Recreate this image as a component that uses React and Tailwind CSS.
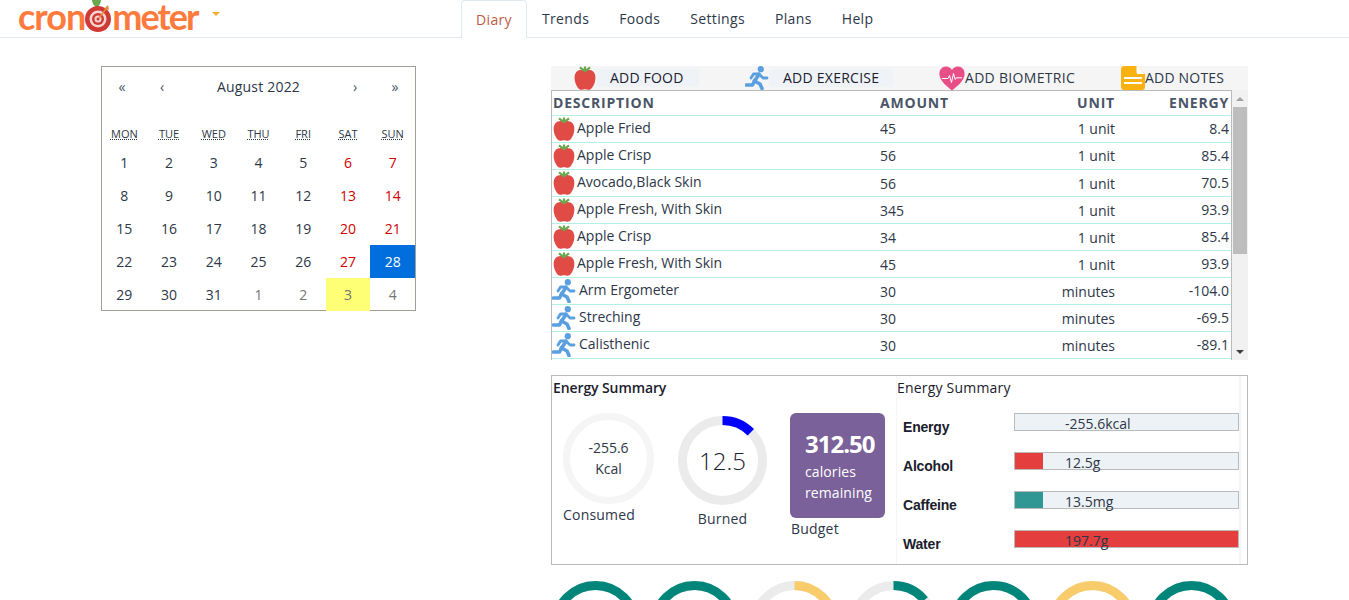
import React from 'react';

const tabs = ['Trends', 'Foods', 'Settings', 'Plans', 'Help'];

const entries = [
  { type: 'food', name: 'Apple Fried', amount: '45', unit: '1 unit', energy: '8.4' },
  { type: 'food', name: 'Apple Crisp', amount: '56', unit: '1 unit', energy: '85.4' },
  { type: 'food', name: 'Avocado,Black Skin', amount: '56', unit: '1 unit', energy: '70.5' },
  { type: 'food', name: 'Apple Fresh, With Skin', amount: '345', unit: '1 unit', energy: '93.9' },
  { type: 'food', name: 'Apple Crisp', amount: '34', unit: '1 unit', energy: '85.4' },
  { type: 'food', name: 'Apple Fresh, With Skin', amount: '45', unit: '1 unit', energy: '93.9' },
  { type: 'exercise', name: 'Arm Ergometer', amount: '30', unit: 'minutes', energy: '-104.0' },
  { type: 'exercise', name: 'Streching', amount: '30', unit: 'minutes', energy: '-69.5' },
  { type: 'exercise', name: 'Calisthenic', amount: '30', unit: 'minutes', energy: '-89.1' },
];

const weekdays = ['Mon', 'Tue', 'Wed', 'Thu', 'Fri', 'Sat', 'Sun'];

const days = [
  1, 2, 3, 4, 5, 6, 7,
  8, 9, 10, 11, 12, 13, 14,
  15, 16, 17, 18, 19, 20, 21,
  22, 23, 24, 25, 26, 27, 28,
  29, 30, 31, 1, 2, 3, 4,
];

const bars = [
  { label: 'Energy', value: '-255.6kcal', fill: null, width: 0 },
  { label: 'Alcohol', value: '12.5g', fill: 'bg-[#e53e3e]', width: 28 },
  { label: 'Caffeine', value: '13.5mg', fill: 'bg-[#319795]', width: 28 },
  { label: 'Water', value: '197.7g', fill: 'bg-[#e53e3e]', width: 223 },
];

const bottomRings = [
  { color: '#00857a', pct: 100 },
  { color: '#00857a', pct: 100 },
  { color: '#f9cc6b', pct: 50 },
  { color: '#00857a', pct: 14 },
  { color: '#00857a', pct: 100 },
  { color: '#f9cc6b', pct: 100 },
  { color: '#00857a', pct: 100 },
];

const AppleIcon = ({ className }) => (
  <svg className={className} viewBox="0 0 24 26">
    <path d="M12 5 C9.5 3.6 5 3.8 2.6 6.6 C0.4 9.2 0.2 13.6 1.4 17.6 C2.6 21.8 5.2 25.8 8 25.8 C9.6 25.8 10.6 25.2 12 25.2 C13.4 25.2 14.4 25.8 16 25.8 C18.8 25.8 21.4 21.8 22.6 17.6 C23.8 13.6 23.6 9.2 21.4 6.6 C19 3.8 14.5 3.6 12 5 Z" fill="#e04b46" />
    <path d="M6.5 1.5 L12 5.5 L17.5 1.5 M12 0.5 V5.5" fill="none" stroke="#6aa84f" strokeWidth="2.4" />
  </svg>
);

const RunnerIcon = ({ className }) => (
  <svg className={className} viewBox="0 0 24 24" fill="none" stroke="#5a9fe0" strokeWidth="3.6" strokeLinecap="round" strokeLinejoin="round">
    <circle cx="15.8" cy="3.2" r="3.1" fill="#5a9fe0" stroke="none" />
    <path d="M14 8.5 L9.5 15" />
    <path d="M14 8 H8.5 L6 12" strokeWidth="2.8" />
    <path d="M14 8 L18 12 H22" strokeWidth="2.8" />
    <path d="M9.5 15 L7.5 19 H1.5" />
    <path d="M9.5 15 L15 18 L17 22.5" />
  </svg>
);

const HeartIcon = ({ className }) => (
  <svg className={className} viewBox="0 0 26 25">
    <path d="M13 24.5 C9 21 1 15.5 0.4 8.4 C0 3.6 3.4 0.4 7 0.4 C9.6 0.4 11.8 1.8 13 4 C14.2 1.8 16.4 0.4 19 0.4 C22.6 0.4 26 3.6 25.6 8.4 C25 15.5 17 21 13 24.5 Z" fill="#e94f87" />
    <path d="M3 12.5 H9 L10.5 9.5 L12.5 16.5 L14.5 7.5 L16.2 13.5 L17.2 11.8 H23" fill="none" stroke="#fff" strokeWidth="1" />
  </svg>
);

const NotesIcon = ({ className }) => (
  <svg className={className} viewBox="0 0 24 24">
    <path d="M3 0 H15.5 L24 8 V21 C24 22.7 22.7 24 21 24 H3 C1.3 24 0 22.7 0 21 V3 C0 1.3 1.3 0 3 0 Z" fill="#f9b20f" />
    <path d="M15.5 0 L24 8 H17 C16.2 8 15.5 7.3 15.5 6.5 Z" fill="#fff" />
    <rect x="3" y="11" width="18" height="2" fill="#fff" />
    <rect x="3" y="16" width="18" height="2" fill="#fff" />
  </svg>
);

const Ring = ({ size = 89, stroke = 9, track = '#ebebeb', color, pct = 0 }) => {
  const r = (size - stroke) / 2;
  const c = 2 * Math.PI * r;
  return (
    <svg width={size} height={size} className="absolute top-0 left-0">
      <circle cx={size / 2} cy={size / 2} r={r} fill="none" stroke={track} strokeWidth={stroke} />
      {pct > 0 && (
        <circle
          cx={size / 2}
          cy={size / 2}
          r={r}
          fill="none"
          stroke={color}
          strokeWidth={stroke}
          strokeDasharray={`${(c * pct) / 100} ${c}`}
          transform={`rotate(-90 ${size / 2} ${size / 2})`}
        />
      )}
    </svg>
  );
};

const Calendar = () => (
  <div className="w-[315px] h-[245px] border border-[#a0a096] text-[#2d3748]">
    <div className="flex h-[40px] text-sm">
      <button className="w-[40px] text-[#4a5568]">«</button>
      <button className="w-[40px] text-[#4a5568]">‹</button>
      <span className="flex-1 flex items-center justify-center tracking-[0.2px]">August 2022</span>
      <button className="w-[40px] text-[#4a5568]">›</button>
      <button className="w-[40px] text-[#4a5568]">»</button>
    </div>
    <div className="grid grid-cols-7 mt-[16px] h-[22px] text-[11px] uppercase text-center items-center">
      {weekdays.map((d) => (
        <span key={d} className="underline decoration-dotted underline-offset-[1px]">{d}</span>
      ))}
    </div>
    <div className="grid grid-cols-7 mt-[2px] text-sm">
      {days.map((d, i) => {
        let color = '';
        if (i % 7 >= 5) color = 'text-[#d10000]';
        if (i > 30) color = 'text-[#757575]';
        if (i === 27) color = 'bg-[#006edc] text-white';
        if (i === 33) color = 'bg-[#ffff76] text-[#757575]';
        return (
          <div key={i} className={`h-[32.8px] flex items-center justify-center ${color}`}>{d}</div>
        );
      })}
    </div>
  </div>
);

const Toolbar = () => (
  <div className="flex items-center h-[24px] bg-[#f5f5f5] text-sm text-[#2d3748]">
    <AppleIcon className="w-[24px] h-[24px] ml-[22px] shrink-0" />
    <span className="w-[102px] h-[18px] flex items-center pl-[13px] bg-[#eff3f8] rounded font-medium text-[#1a202c] tracking-[0.2px]">ADD FOOD</span>
    <RunnerIcon className="w-[24px] h-[24px] ml-[46px] shrink-0" />
    <span className="w-[124px] h-[18px] flex items-center pl-[14px] bg-[#eff3f8] rounded font-medium text-[#1a202c] tracking-[0.25px]">ADD EXERCISE</span>
    <HeartIcon className="w-[26px] h-[25px] ml-[46px] shrink-0" />
    <span className="w-[110px] whitespace-nowrap tracking-[0.3px] -mt-[1px]">ADD BIOMETRIC</span>
    <NotesIcon className="w-[24px] h-[24px] ml-[46px] shrink-0" />
    <span className="tracking-[0.2px] -mt-[1px]">ADD NOTES</span>
  </div>
);

const FoodTable = () => (
  <div className="flex h-[270px] overflow-hidden">
    <div className="w-[681px] border-t border-l border-[#bbbbbb] border-r text-sm text-[#2d3748]">
      <table className="w-[679px] table-fixed">
        <colgroup>
          <col className="w-[328px]" />
          <col className="w-[120px]" />
          <col className="w-[117px]" />
          <col className="w-[114px]" />
        </colgroup>
        <thead>
          <tr className="h-[24px] border-b border-[#b2f0e6] text-[#4a5568] tracking-[0.8px]">
            <th className="text-left pl-[1px] font-bold">DESCRIPTION</th>
            <th className="text-left font-bold">AMOUNT</th>
            <th className="text-right pr-[2px] font-bold">UNIT</th>
            <th className="text-right pr-[2px] font-bold">ENERGY</th>
          </tr>
        </thead>
        <tbody>
          {entries.map((e, i) => (
            <tr key={i} className="h-[27px] border-b border-[#b2f0e6]">
              <td>
                <div className="flex items-center">
                  {e.type === 'food' ? (
                    <AppleIcon className="w-[22px] h-[24px] ml-[1px] mr-[2px] shrink-0" />
                  ) : (
                    <RunnerIcon className="w-[24px] h-[24px] mr-[3px] shrink-0" />
                  )}
                  <span className="-mt-[2px]">{e.name}</span>
                </div>
              </td>
              <td className={i > 1 ? 'pt-[2px]' : ''}>{e.amount}</td>
              <td className={`text-right pr-[2px] ${i > 1 ? 'pt-[2px]' : ''}`}>{e.unit}</td>
              <td className="text-right pr-[2px]">{e.energy}</td>
            </tr>
          ))}
        </tbody>
      </table>
    </div>
    <div className="w-[16px] bg-[#f1f1f1] flex flex-col items-center">
      <div className="h-[17px] flex items-center justify-center">
        <div className="w-0 h-0 border-x-[4px] border-x-transparent border-b-[4px] border-b-[#a3a3a3]" />
      </div>
      <div className="w-[14px] h-[147px] bg-[#bdbdbd]" />
      <div className="flex-1" />
      <div className="h-[17px] flex items-center justify-center">
        <div className="w-0 h-0 border-x-[4px] border-x-transparent border-t-[4px] border-t-[#3f3f3f]" />
      </div>
    </div>
  </div>
);

const EnergySummary = () => (
  <div className="flex h-[190px] mt-[15px] border border-[#bbbbbb] text-sm text-[#2d3748]">
    <div className="w-[344px] pl-[1px] shrink-0">
      <h3 className="mt-[2px] font-semibold text-[#1a202c] tracking-[-0.1px] whitespace-nowrap">Energy Summary</h3>
      <div className="flex mt-[15px]">
        <div className="ml-[10px] w-[91px]">
          <div className="relative w-[91px] h-[91px] flex flex-col items-center justify-center leading-[21px] pb-[2px]">
            <Ring size={91} stroke={7} track="#f5f5f5" />
            <span className="relative">-255.6</span>
            <span className="relative">Kcal</span>
          </div>
          <p className="mt-[1px] whitespace-nowrap tracking-[0.2px]">Consumed</p>
        </div>
        <div className="ml-[24px] w-[89px] mt-[3px]">
          <div className="relative w-[89px] h-[89px] flex items-center justify-center text-2xl font-light text-[#1a202c]">
            <Ring color="#0000ff" pct={12.5} />
            <span className="relative">12.5</span>
          </div>
          <p className="mt-[4px] text-center tracking-[0.2px]">Burned</p>
        </div>
        <div className="ml-[23px] w-[95px] shrink-0">
          <div className="w-[95px] h-[105px] pl-[15px] pt-[14px] rounded-md bg-[#7a6199] text-white">
            <div className="text-[24px] leading-[34px] font-bold tracking-[-1px]">312.50</div>
            <div className="leading-[21px] tracking-[0.1px]">calories remaining</div>
          </div>
          <p className="mt-[1px] ml-[1px] tracking-[0.2px]">Budget</p>
        </div>
      </div>
    </div>
    <div className="flex-1 border-l border-r-[2px] border-[#f5f5f5] mr-[7px]">
      <h3 className="mt-[2px] font-medium tracking-[0.2px] text-[#1a202c]">Energy Summary</h3>
      <div className="mt-[5px] flex flex-col gap-[21px] pt-[10px]">
        {bars.map((b) => (
          <div key={b.label} className="flex h-[18px]">
            <span className="w-[117px] pl-[6px] mt-[5px] font-['Liberation_Sans',sans-serif] font-bold text-[#1a202c] text-[14px] leading-[18px] tracking-[-0.2px]">{b.label}</span>
            <div className="relative w-[225px] h-[18px] bg-[#edf2f7] border border-[#bbbbbb]">
              {b.fill && <div className={`h-full ${b.fill}`} style={{ width: b.width }} />}
              <span className="absolute left-[50px] top-[1px] leading-[18px]">{b.value}</span>
            </div>
          </div>
        ))}
      </div>
    </div>
  </div>
);

const App = () => (
  <div className="h-screen overflow-hidden bg-white font-['Open_Sans',sans-serif]">
    <header className="flex h-[38px] border-b border-[#e2e8f0]">
      <div className="w-[461px] pl-[18px] flex items-start">
        <span className="text-[36px] leading-[36px] -mt-[2px] font-['Lato',sans-serif] font-bold text-[#ff7a3d] tracking-[-1px]">cron</span>
        <svg viewBox="0 0 28 32" className="w-[28px] h-[32px] shrink-0 -ml-[1px]">
          <path d="M13 8 C10 6 8 3 8 0 H17 C17 3 15 6 13 8 Z" fill="#6aa84f" />
          <circle cx="14" cy="19" r="13" fill="#cf3a34" />
          <circle cx="14" cy="19" r="8.5" fill="#f5d5d0" />
          <circle cx="14" cy="19" r="6" fill="#cf3a34" />
          <circle cx="14" cy="19" r="3.5" fill="#f5d5d0" />
          <circle cx="14" cy="19" r="1.5" fill="#cf3a34" />
          <path d="M15 18 L22 9" stroke="#e8873a" strokeWidth="1.5" />
          <path d="M20 9 L24 5 L25 10 Z" fill="#e8873a" />
        </svg>
        <span className="text-[36px] leading-[36px] -mt-[2px] font-['Lato',sans-serif] font-bold text-[#ff7a3d] tracking-[-2px]">meter</span>
        <div className="ml-[15px] mt-[12px] w-0 h-0 border-x-[4px] border-x-transparent border-t-[4px] border-t-[#f6ad37]" />
      </div>
      <nav className="flex text-sm text-[#2d3748] tracking-[0.35px]">
        <a className="h-[38px] flex items-center px-[14px] bg-white border border-b-0 border-[#e2e8f0] rounded-t text-[#c05a45]">Diary</a>
        {tabs.map((t) => (
          <a key={t} className="h-[38px] flex items-center px-[15px]">{t}</a>
        ))}
      </nav>
    </header>

    <main className="flex pt-[28px]">
      <div className="ml-[101px] w-[450px] shrink-0">
        <Calendar />
      </div>
      <div className="w-[697px]">
        <Toolbar />
        <FoodTable />
        <EnergySummary />
        <div className="flex gap-[10.4px] mt-[16px]">
          {bottomRings.map((r, i) => (
            <div key={i} className="relative w-[89px] h-[89px]">
              <Ring color={r.color} pct={r.pct} />
            </div>
          ))}
        </div>
      </div>
    </main>
  </div>
);

export default App;
